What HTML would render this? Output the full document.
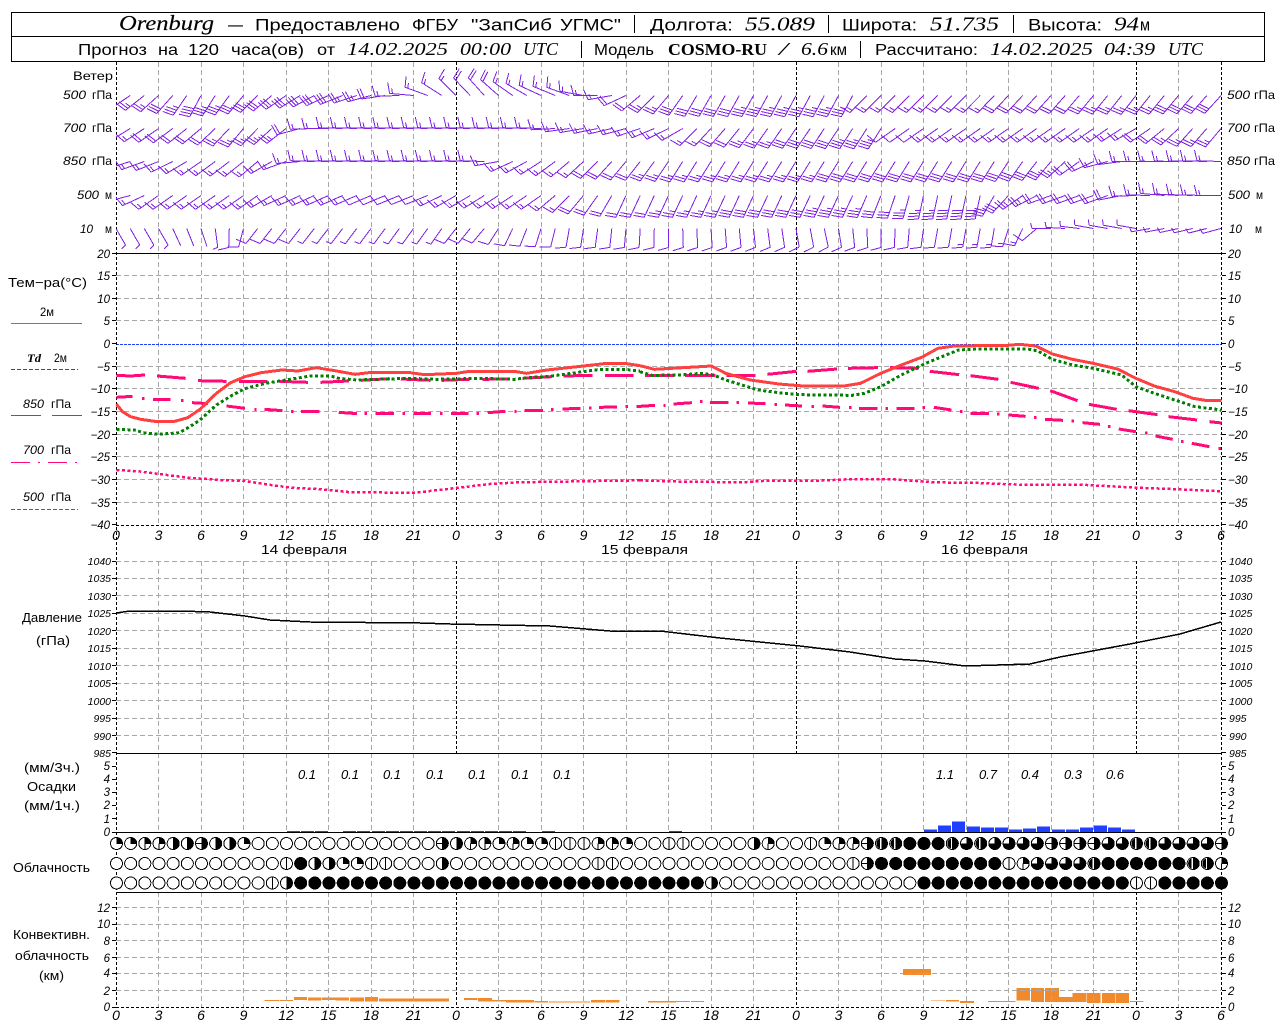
<!DOCTYPE html>
<html lang="ru"><head><meta charset="utf-8"><title>Orenburg</title>
<style>
html,body{margin:0;padding:0;background:#fff;overflow:hidden}
svg{display:block}
svg *{shape-rendering:crispEdges}
text{font-family:"Liberation Sans",sans-serif;fill:#000;shape-rendering:auto}
.h1{font-size:17px}.h2{font-size:16px}
.si{font-family:"Liberation Serif",serif;font-style:italic}
.i{font-style:italic}
.l{font-size:12px}
.ax{font-size:11.5px;font-style:italic;text-anchor:end}
.ar{font-size:11.5px;font-style:italic}
.xl{font-size:14px;font-style:italic;text-anchor:middle}
.ve{vector-effect:non-scaling-stroke;fill:none}
</style></head><body>
<svg id="s" xmlns="http://www.w3.org/2000/svg" width="1280" height="1024" viewBox="0 0 1280 1024">
<rect width="1280" height="1024" fill="#fff"/>
<!-- convective bars -->
<g id="bars">
<g transform="translate(0,750) scale(.40816,.33333)" fill="#f08a2c"><path d="M648 750H685V753H648ZM686 750H718V753H686ZM720 741H752V750H720ZM755 742H787V752H755ZM788 742H822V750H788ZM822 742H855V752H822ZM857 742H892V755H857ZM894 741H926V755H894ZM929 745H1100V755H929ZM1137 744H1170V750H1137ZM1171 744H1205V755H1171ZM1205 750H1240V755H1205ZM1240 750H1308V758H1240ZM1310 753H1342V758H1310ZM1345 754H1445V758H1345ZM1448 750H1482V758H1448ZM1484 750H1518V758H1484Z"/></g>
<g transform="translate(640,750) scale(.40816,.33333)" fill="#f08a2c"><path d="M20 753H88V758H20ZM88 753H122V756H88ZM125 753H157V756H125ZM644 657H713V675H644ZM713 750H748V752H713ZM750 750H782V755H750ZM784 753H818V759H784ZM853 753H920V756H853ZM923 714H955V752H923ZM958 714H990V756H958ZM992 714H1026V756H992ZM1026 741H1060V756H1026ZM1060 729H1094V756H1060ZM1095 729H1128V759H1095ZM1132 729H1164V759H1132ZM1165 729H1198V759H1165ZM1200 753H1234V756H1200Z"/></g>
</g>
<g id="js"></g>
<!-- header -->
<rect x="11.5" y="12.5" width="1253" height="49" fill="none" stroke="#000"/>
<path d="M11 36.5H1265M634.5 15V33M828.5 15V33M1013.5 15V33M581.5 41V58M860.5 41V58" stroke="#000" fill="none"/>
<g class="h1">
<text x="119" y="30" class="si" font-size="21" textLength="95" lengthAdjust="spacingAndGlyphs" stroke="#000" stroke-width=".15">Orenburg</text>
<text x="228" y="30" textLength="15" lengthAdjust="spacingAndGlyphs">—</text>
<text x="255" y="30.5" textLength="145" lengthAdjust="spacingAndGlyphs">Предоставлено</text>
<text x="412" y="30.5" textLength="46" lengthAdjust="spacingAndGlyphs">ФГБУ</text>
<text x="471" y="30.5" textLength="81" lengthAdjust="spacingAndGlyphs">"ЗапСиб</text>
<text x="560" y="30.5" textLength="61" lengthAdjust="spacingAndGlyphs">УГМС"</text>
<text x="650" y="30.5" textLength="83" lengthAdjust="spacingAndGlyphs">Долгота:</text>
<text x="745" y="30.5" class="si" font-size="20" textLength="70" lengthAdjust="spacingAndGlyphs">55.089</text>
<text x="842" y="30.5" textLength="75" lengthAdjust="spacingAndGlyphs">Широта:</text>
<text x="930" y="30.5" class="si" font-size="20" textLength="69" lengthAdjust="spacingAndGlyphs">51.735</text>
<text x="1028" y="30.5" textLength="74" lengthAdjust="spacingAndGlyphs">Высота:</text>
<text x="1114" y="30.5" class="si" font-size="20" textLength="25" lengthAdjust="spacingAndGlyphs">94</text>
<text x="1140" y="30.5" textLength="10" lengthAdjust="spacingAndGlyphs">м</text>
</g>
<g class="h2">
<text x="78" y="55" textLength="69" lengthAdjust="spacingAndGlyphs">Прогноз</text>
<text x="158" y="55" textLength="20" lengthAdjust="spacingAndGlyphs">на</text>
<text x="188" y="55" textLength="31" lengthAdjust="spacingAndGlyphs">120</text>
<text x="231" y="55" textLength="73" lengthAdjust="spacingAndGlyphs">часа(ов)</text>
<text x="317" y="55" textLength="18" lengthAdjust="spacingAndGlyphs">от</text>
<text x="347" y="55" class="si" font-size="18" textLength="101" lengthAdjust="spacingAndGlyphs">14.02.2025</text>
<text x="460" y="55" class="si" font-size="18" textLength="51" lengthAdjust="spacingAndGlyphs">00:00</text>
<text x="523" y="55" class="si" font-size="18" textLength="35" lengthAdjust="spacingAndGlyphs">UTC</text>
<text x="594" y="55" textLength="60" lengthAdjust="spacingAndGlyphs">Модель</text>
<text x="668" y="55" style="font-family:'Liberation Serif',serif;font-weight:bold" font-size="17" textLength="99" lengthAdjust="spacingAndGlyphs">COSMO-RU</text>
<text x="779" y="55" class="si" font-size="18" textLength="9" lengthAdjust="spacingAndGlyphs">/</text>
<text x="801" y="55" class="si" font-size="18" textLength="27" lengthAdjust="spacingAndGlyphs">6.6</text>
<text x="830" y="55" textLength="17" lengthAdjust="spacingAndGlyphs">км</text>
<text x="875" y="55" textLength="103" lengthAdjust="spacingAndGlyphs">Рассчитано:</text>
<text x="990" y="55" class="si" font-size="18" textLength="103" lengthAdjust="spacingAndGlyphs">14.02.2025</text>
<text x="1104" y="55" class="si" font-size="18" textLength="51" lengthAdjust="spacingAndGlyphs">04:39</text>
<text x="1168" y="55" class="si" font-size="18" textLength="35" lengthAdjust="spacingAndGlyphs">UTC</text>
</g>
<!-- wind labels -->
<g class="l">
<text x="73" y="80" textLength="40" lengthAdjust="spacingAndGlyphs">Ветер</text>
<text x="63" y="99" class="i" textLength="23" lengthAdjust="spacingAndGlyphs">500</text><text x="92" y="99" textLength="20" lengthAdjust="spacingAndGlyphs">гПа</text>
<text x="63" y="132" class="i" textLength="23" lengthAdjust="spacingAndGlyphs">700</text><text x="92" y="132" textLength="20" lengthAdjust="spacingAndGlyphs">гПа</text>
<text x="63" y="165" class="i" textLength="23" lengthAdjust="spacingAndGlyphs">850</text><text x="92" y="165" textLength="20" lengthAdjust="spacingAndGlyphs">гПа</text>
<text x="77" y="199" class="i" textLength="22" lengthAdjust="spacingAndGlyphs">500</text><text x="105" y="199" textLength="7" lengthAdjust="spacingAndGlyphs">м</text>
<text x="80" y="233" class="i" textLength="13" lengthAdjust="spacingAndGlyphs">10</text><text x="105" y="233" textLength="7" lengthAdjust="spacingAndGlyphs">м</text>
<text x="1227" y="99" class="i" textLength="23" lengthAdjust="spacingAndGlyphs">500</text><text x="1254" y="99" textLength="21" lengthAdjust="spacingAndGlyphs">гПа</text>
<text x="1227" y="132" class="i" textLength="23" lengthAdjust="spacingAndGlyphs">700</text><text x="1254" y="132" textLength="21" lengthAdjust="spacingAndGlyphs">гПа</text>
<text x="1227" y="165" class="i" textLength="23" lengthAdjust="spacingAndGlyphs">850</text><text x="1254" y="165" textLength="21" lengthAdjust="spacingAndGlyphs">гПа</text>
<text x="1228" y="199" class="i" textLength="22" lengthAdjust="spacingAndGlyphs">500</text><text x="1256" y="199" textLength="7" lengthAdjust="spacingAndGlyphs">м</text>
<text x="1229" y="233" class="i" textLength="13" lengthAdjust="spacingAndGlyphs">10</text><text x="1255" y="233" textLength="7" lengthAdjust="spacingAndGlyphs">м</text>
<!-- temp legend -->
<text x="8" y="287" font-size="13" textLength="79" lengthAdjust="spacingAndGlyphs">Тем−ра(°С)</text>
<text x="40" y="316" textLength="14" lengthAdjust="spacingAndGlyphs">2м</text>
<text x="27" y="362" class="si" style="font-weight:bold" textLength="14" lengthAdjust="spacingAndGlyphs">Td</text><text x="54" y="362" textLength="13" lengthAdjust="spacingAndGlyphs">2м</text>
<text x="23" y="408" class="i" textLength="21" lengthAdjust="spacingAndGlyphs">850</text><text x="51" y="408" textLength="20" lengthAdjust="spacingAndGlyphs">гПа</text>
<text x="23" y="454" class="i" textLength="21" lengthAdjust="spacingAndGlyphs">700</text><text x="51" y="454" textLength="20" lengthAdjust="spacingAndGlyphs">гПа</text>
<text x="23" y="501" class="i" textLength="21" lengthAdjust="spacingAndGlyphs">500</text><text x="51" y="501" textLength="20" lengthAdjust="spacingAndGlyphs">гПа</text>
<text x="261" y="554" font-size="13" textLength="86" lengthAdjust="spacingAndGlyphs">14 февраля</text>
<text x="601" y="554" font-size="13" textLength="87" lengthAdjust="spacingAndGlyphs">15 февраля</text>
<text x="941" y="554" font-size="13" textLength="87" lengthAdjust="spacingAndGlyphs">16 февраля</text>
<text x="22" y="622" font-size="13" textLength="60" lengthAdjust="spacingAndGlyphs">Давление</text>
<text x="36" y="645" font-size="13" textLength="34" lengthAdjust="spacingAndGlyphs">(гПа)</text>
<text x="24" y="772" font-size="13" textLength="56" lengthAdjust="spacingAndGlyphs">(мм/3ч.)</text>
<text x="27" y="791" font-size="13" textLength="49" lengthAdjust="spacingAndGlyphs">Осадки</text>
<text x="24" y="810" font-size="13" textLength="56" lengthAdjust="spacingAndGlyphs">(мм/1ч.)</text>
<text x="13" y="872" font-size="13" textLength="77" lengthAdjust="spacingAndGlyphs">Облачность</text>
<text x="13" y="939" font-size="13" textLength="77" lengthAdjust="spacingAndGlyphs">Конвективн.</text>
<text x="15" y="960" font-size="13" textLength="74" lengthAdjust="spacingAndGlyphs">облачность</text>
<text x="39" y="980" font-size="13" textLength="25" lengthAdjust="spacingAndGlyphs">(км)</text>
</g>
<!-- legend lines -->
<path d="M11 323.5H82" stroke="#ff4040" fill="none"/>
<path d="M11 369.5H78" stroke="#008000" stroke-dasharray="4 2" fill="none"/>
<path d="M11 415.5H41M52 415.5H82" stroke="#ff0a78" fill="none"/>
<path d="M11 462.5H30M38 462.5H40M48 462.5H67M75 462.5H77" stroke="#ff0a78" fill="none"/>
<path d="M11 509.5H78" stroke="#ff0a78" stroke-dasharray="4 2" fill="none"/>
<!-- left axis numbers -->
<g class="ax">
<text x="110" y="258">20</text><text x="110" y="280">15</text><text x="110" y="303">10</text><text x="110" y="325">5</text><text x="110" y="348">0</text><text x="110" y="371">−5</text><text x="110" y="393">−10</text><text x="110" y="416">−15</text><text x="110" y="439">−20</text><text x="110" y="461">−25</text><text x="110" y="484">−30</text><text x="110" y="507">−35</text><text x="110" y="529">−40</text>
<g style="font-size:10.5px"><text x="111" y="565">1040</text><text x="111" y="582">1035</text><text x="111" y="600">1030</text><text x="111" y="617">1025</text><text x="111" y="635">1020</text><text x="111" y="652">1015</text><text x="111" y="670">1010</text><text x="111" y="687">1005</text><text x="111" y="705">1000</text><text x="111" y="722">995</text><text x="111" y="740">990</text><text x="111" y="757">985</text></g>
<text x="110" y="770">5</text><text x="110" y="783">4</text><text x="110" y="796">3</text><text x="110" y="809">2</text><text x="110" y="823">1</text><text x="110" y="836">0</text>
<text x="110" y="912">12</text><text x="110" y="928">10</text><text x="110" y="945">8</text><text x="110" y="962">6</text><text x="110" y="977">4</text><text x="110" y="995">2</text><text x="110" y="1011">0</text>
</g>
<!-- right axis numbers -->
<g class="ar">
<text x="1228" y="258">20</text><text x="1228" y="280">15</text><text x="1228" y="303">10</text><text x="1228" y="325">5</text><text x="1228" y="348">0</text><text x="1228" y="371">−5</text><text x="1228" y="393">−10</text><text x="1228" y="416">−15</text><text x="1228" y="439">−20</text><text x="1228" y="461">−25</text><text x="1228" y="484">−30</text><text x="1228" y="507">−35</text><text x="1228" y="529">−40</text>
<g style="font-size:10.5px"><text x="1229" y="565">1040</text><text x="1229" y="582">1035</text><text x="1229" y="600">1030</text><text x="1229" y="617">1025</text><text x="1229" y="635">1020</text><text x="1229" y="652">1015</text><text x="1229" y="670">1010</text><text x="1229" y="687">1005</text><text x="1229" y="705">1000</text><text x="1229" y="722">995</text><text x="1229" y="740">990</text><text x="1229" y="757">985</text></g>
<text x="1228" y="770">5</text><text x="1228" y="783">4</text><text x="1228" y="796">3</text><text x="1228" y="809">2</text><text x="1228" y="823">1</text><text x="1228" y="836">0</text>
<text x="1228" y="912">12</text><text x="1228" y="928">10</text><text x="1228" y="945">8</text><text x="1228" y="962">6</text><text x="1228" y="977">4</text><text x="1228" y="995">2</text><text x="1228" y="1011">0</text>
</g>
<!-- x labels -->
<g class="xl">
<text x="116" y="540">0</text><text x="158.5" y="540">3</text><text x="201" y="540">6</text><text x="243.5" y="540">9</text><text x="286" y="540">12</text><text x="328.5" y="540">15</text><text x="371" y="540">18</text><text x="413.5" y="540">21</text><text x="456" y="540">0</text><text x="498.5" y="540">3</text><text x="541" y="540">6</text><text x="583.5" y="540">9</text><text x="626" y="540">12</text><text x="668.5" y="540">15</text><text x="711" y="540">18</text><text x="753.5" y="540">21</text><text x="796" y="540">0</text><text x="838.5" y="540">3</text><text x="881" y="540">6</text><text x="923.5" y="540">9</text><text x="966" y="540">12</text><text x="1008.5" y="540">15</text><text x="1051" y="540">18</text><text x="1093.5" y="540">21</text><text x="1136" y="540">0</text><text x="1178.5" y="540">3</text><text x="1221" y="540">6</text>
<text x="116" y="1020">0</text><text x="158.5" y="1020">3</text><text x="201" y="1020">6</text><text x="243.5" y="1020">9</text><text x="286" y="1020">12</text><text x="328.5" y="1020">15</text><text x="371" y="1020">18</text><text x="413.5" y="1020">21</text><text x="456" y="1020">0</text><text x="498.5" y="1020">3</text><text x="541" y="1020">6</text><text x="583.5" y="1020">9</text><text x="626" y="1020">12</text><text x="668.5" y="1020">15</text><text x="711" y="1020">18</text><text x="753.5" y="1020">21</text><text x="796" y="1020">0</text><text x="838.5" y="1020">3</text><text x="881" y="1020">6</text><text x="923.5" y="1020">9</text><text x="966" y="1020">12</text><text x="1008.5" y="1020">15</text><text x="1051" y="1020">18</text><text x="1093.5" y="1020">21</text><text x="1136" y="1020">0</text><text x="1178.5" y="1020">3</text><text x="1221" y="1020">6</text>
<!-- precip totals -->
<g style="font-size:13px"><text x="307" y="779">0.1</text><text x="350" y="779">0.1</text><text x="392" y="779">0.1</text><text x="435" y="779">0.1</text><text x="477" y="779">0.1</text><text x="520" y="779">0.1</text><text x="562" y="779">0.1</text><text x="945" y="779">1.1</text><text x="988" y="779">0.7</text><text x="1030" y="779">0.4</text><text x="1073" y="779">0.3</text><text x="1115" y="779">0.6</text></g>
</g>
<!-- temperature curves: zoom coords -->
<g transform="translate(0,250) scale(.40816,.33333)">
<polyline class="ve" stroke="#ff0a78" stroke-width="2.5" stroke-dasharray="3 2.5" points="285,660 340,664 390,672 460,683 540,690 600,693 680,708 730,715 770,716 860,727 1020,728 1060,722 1118,714 1200,702 1270,697 1568,691"/>
<path class="ve" stroke="#ff0a78" stroke-width="3" d="M285 442L325 439M348 445L354 446M375 448L418 448M443 451L449 451M470 458L510 461M555 468L600 475M623 478L629 478M648 478L692 482M713 484L719 484M738 484L783 484M830 487L875 491M893 491L899 491M920 491L965 491M986 491L992 491M1013 491L1056 491M1078 491L1084 491M1105 491L1148 491M1168 490L1174 490M1195 488L1238 484M1260 484L1266 484M1285 482L1330 481M1350 478L1356 478M1378 477L1422 475M1443 474L1449 474M1468 472L1512 471M1533 470L1539 470M1560 469L1568 469"/>
<path class="ve" stroke="#ff0a78" stroke-width="3" d="M285 376L320 378L355 375M385 378L455 385M485 392L555 394M585 394L655 394M685 394L755 397M785 397L855 393M885 391L955 386M982 387L1055 391M1082 391L1150 388M1182 388L1250 387M1280 385L1352 380M1380 378L1452 376M1482 376L1552 376"/>
<polyline class="ve" stroke="#008000" stroke-width="3" stroke-dasharray="3 2.5" points="285,538 330,540 350,548 390,553 440,548 465,530 490,510 530,465 570,435 600,416 650,400 700,390 760,378 810,378 830,385 875,390 1000,385 1070,388 1118,387 1170,385 1260,388 1300,382 1340,380 1400,370 1470,358 1530,358 1568,363"/>
<polyline class="ve" stroke="#ff4040" stroke-width="3" points="285,462 300,485 320,500 345,508 385,515 425,515 460,503 490,478 530,430 565,398 600,380 640,368 690,360 730,363 775,353 820,362 870,373 910,367 1000,367 1040,374 1118,370 1150,364 1260,364 1290,370 1340,360 1430,348 1480,341 1530,340 1568,347"/>
</g>
<g transform="translate(640,250) scale(.40816,.33333)">
<polyline class="ve" stroke="#ff0a78" stroke-width="2.5" stroke-dasharray="3 2.5" points="0,691 130,696 180,696 250,697 300,693 420,693 510,688 620,688 720,697 830,699 930,704 1080,704 1170,710 1215,713 1300,717 1425,724"/>
<path class="ve" stroke="#ff0a78" stroke-width="3" d="M0 469L37 466M57 466L63 466M82 462L127 458M147 455L153 455M172 458L217 458M237 457L243 457M265 459L307 461M330 463L336 463M355 465L397 468M420 469L426 469M447 468L490 472M512 472L518 472M537 476L582 476M602 475L608 475M628 475L673 475M692 473L698 473M720 472L763 480M784 484L790 484M810 491L855 491M875 492L881 492M903 495L945 499M965 502L971 502M992 508L1036 511M1057 513L1063 513M1084 518L1127 523M1147 530L1153 530M1173 537L1215 545M1237 549L1243 549M1263 558L1305 568M1325 575L1331 575M1352 580L1395 590M1417 596L1423 596"/>
<path class="ve" stroke="#ff0a78" stroke-width="3" d="M12 376L85 376M110 376L185 376M212 377L283 377M312 373L383 364M410 364L483 357M510 355L583 353M612 353L683 355M710 364L782 374M810 377L878 388M908 397L977 415M1005 422L1072 452M1100 463L1168 478M1197 482L1268 494M1295 500L1365 510M1395 515L1425 519"/>
<polyline class="ve" stroke="#008000" stroke-width="3" stroke-dasharray="3 2.5" points="0,365 30,376 100,375 150,370 180,375 210,390 250,405 290,420 340,428 390,434 520,436 550,430 590,410 640,375 700,340 750,315 780,300 830,297 950,297 975,303 1010,328 1060,345 1110,355 1180,375 1215,410 1260,430 1310,450 1360,470 1425,480"/>
<polyline class="ve" stroke="#ff4040" stroke-width="3" points="0,347 35,358 120,352 175,348 210,370 270,390 340,402 400,408 500,408 540,400 590,370 640,345 690,322 730,295 770,288 900,286 930,283 970,288 1010,312 1060,328 1110,340 1170,357 1215,385 1260,408 1310,425 1355,445 1390,452 1425,452"/>
</g>
<!-- pressure -->
<polyline fill="none" stroke="#000" stroke-width="1.5" points="116,613 130,611 180,611 210,612 245,616 270,620 310,622 420,623 450,624 550,626 610,631 660,631 720,638 800,646 850,652 895,659 925,661 965,666 1030,664 1060,657 1130,644 1180,634 1221,622"/>
</svg>
<script>
(function(){
var NS='http://www.w3.org/2000/svg',root=document.getElementById('js'),bars=document.getElementById('bars');
function add(p,t,a){var e=document.createElementNS(NS,t);for(var k in a)e.setAttribute(k,a[k]);p.appendChild(e);return e}
var W=14.1667,X0=116;
function px(h){return Math.floor(X0+h*W)+.5}
var small=[12,13,14,16,17,18,19,20,21,22,23,24,25,26,27,28,30,39];
small.forEach(function(h){add(bars,'rect',{x:Math.floor(X0+h*W)+1,y:831,width:13,height:1.5,fill:'#2040ff'})});
var big=[2.3,6.3,10.3,5.3,4.3,4.3,2.3,3.3,5.3,2.3,2.3,4.3,6.3,4.3,2.3];
big.forEach(function(v,i){add(bars,'rect',{x:Math.floor(X0+(57+i)*W)+1,y:832-v,width:13,height:v,fill:'#2040ff'})});
var g='',day='';
var R=[[62,525],[561,753],[753,832],[892,1007]];
for(var k=1;k<26;k++){var x=px(k*3);
  var isDay=k%8===0;
  R.forEach(function(r,j){
    if(isDay){if(j!==2)day+='M'+x+' '+r[0]+'V'+r[1]}
    else g+='M'+x+' '+r[0]+'V'+r[1];
  });
}
function hl(y){g+='M116 '+(Math.floor(y)+.5)+'H1221'}
for(var v=15;v>=-35;v-=5){if(v!==0)hl(253+(20-v)*4.5333)}
for(var i=0;i<11;i++)hl(561+i*17.4545);
for(var c=2;c<=12;c+=2)hl(1007-c*8.27);
add(root,'path',{d:g,stroke:'#a8a8a8','stroke-dasharray':'5 3',fill:'none'});
add(root,'path',{d:'M116 344.5H1221',stroke:'#2040ff','stroke-dasharray':'3 1',fill:'none'});
add(root,'path',{d:day+'M116.5 62V1007M1221.5 62V1007',stroke:'#000','stroke-dasharray':'3 2',fill:'none'});
add(root,'path',{d:'M116 253.5H1222M116 753.5H1222M116 832.5H1222M116 892.5H1222',stroke:'#000',fill:'none'});
add(root,'path',{d:'M116 525.5H1222M116 1007.5H1222',stroke:'#000','stroke-dasharray':'3 2',fill:'none'});
var t='';
function tick(y){var yy=Math.floor(y)+.5;t+='M112 '+yy+'H116M1222 '+yy+'H1226'}
for(v=20;v>=-40;v-=5)tick(253+(20-v)*4.5333);
for(i=0;i<12;i++)tick(561+i*17.4545);
for(i=0;i<6;i++)tick(766+i*13.2);
for(c=0;c<=12;c+=2)tick(1007-c*8.27);
add(root,'path',{d:t,stroke:'#000',fill:'none'});
var clip=add(add(root,'defs',{}),'clipPath',{id:'cw'});add(clip,'rect',{x:116,y:62,width:1106,height:191});
var L=[
[95.5,24,[0,150,4,3,138,5,6,118,8,9,130,6,12,145,6,15,155,6,18,165,5,20,178,3,21,185,3,22,200,3,24,225,3,26,228,4,28,215,3,30,205,3,32,200,3,34,180,3,35,170,3,37,140,4,39,130,5,41,120,6,48,118,7,52,118,7,53,135,3,60,135,3,66,132,4,72,128,5,78,132,6]],
[128.5,24,[0,150,3,6,140,4,9,130,5,12,142,5,13,165,4,14,178,3,16,182,3,30,182,3,32,172,3,36,165,3,40,150,3,41,135,3,46,125,5,54,122,7,55,145,2,60,145,3,70,145,3,72,150,3,76,132,5,78,130,5]],
[161.5,24,[0,165,3,3,158,3,6,145,3,10,140,3,12,160,3,13,175,3,14,182,3,26,182,3,27,170,3,28,155,3,32,140,3,36,130,4,40,122,5,62,122,6,64,125,6,66,130,6,68,145,4,70,165,3,72,180,3,78,182,3]],
[195.5,24,[0,175,3,3,145,3,10,145,3,12,155,3,22,158,2,24,150,3,30,145,3,36,115,4,52,115,7,54,112,6,57,102,7,61,102,8,62,120,6,64,145,5,66,160,4,70,160,4,72,178,3,74,185,3,78,180,3]],
[228.5,19,[0,60,1,3,60,1,4,65,0,6,72,0,7,82,1,8,92,2,9,105,2,10,128,2,12,128,2,14,128,1,23,125,1,24,128,2,26,130,2,28,115,2,32,100,2,36,95,2,40,88,2,44,85,2,50,78,2,54,90,2,58,100,2,62,100,3,64,115,3,65,140,2,66,180,1,69,190,1,72,190,1,73,170,1,78,165,1]]
];
function itp(k,h){for(var i=0;i<k.length-3;i+=3){if(h>=k[i]&&h<=k[i+3]){var f=(h-k[i])/(k[i+3]-k[i]);return [k[i+1]+f*(k[i+4]-k[i+1]),k[i+2]+f*(k[i+5]-k[i+2])]}}return [k[k.length-2],k[k.length-1]]}
var d='',D=Math.PI/180,TH=75;
L.forEach(function(l){
  var LEN=l[1];
  for(var h=0;h<=78;h++){
    var a=itp(l[2],h),ph=a[0]*D,n=Math.round(a[1]),tx=X0+h*W,ty=l[0];
    var ux=Math.cos(ph),uy=Math.sin(ph),ex=tx+LEN*ux,ey=ty+LEN*uy;
    d+='M'+tx.toFixed(1)+' '+ty+'L'+ex.toFixed(1)+' '+ey.toFixed(1);
    var fx=Math.cos(ph+TH*D),fy=Math.sin(ph+TH*D),s=0;
    for(var q=0;q<Math.floor(n/2);q++){var bx=ex-ux*s,by=ey-uy*s;d+='M'+bx.toFixed(1)+' '+by.toFixed(1)+'l'+(fx*11).toFixed(1)+' '+(fy*11).toFixed(1);s+=3}
    if(n%2){var b2x=ex-ux*s,b2y=ey-uy*s;d+='M'+b2x.toFixed(1)+' '+b2y.toFixed(1)+'l'+(fx*5.5).toFixed(1)+' '+(fy*5.5).toFixed(1)}
  }
});
add(root,'path',{d:d,stroke:'#8020e0',fill:'none','clip-path':'url(#cw)'});
function rep(c,n){return new Array(n+1).join(c)}
var rows=[
[843.5,'2233445442'+rep('0',13)+'54332322111332'+'00110000430012335'+'7788876766665555667766665'],
[863.5,rep('0',12)+'18442211'+'000'+'4'+rep('0',10)+'11'+rep('0',16)+'15'+rep('8',9)+'13'+'6666'+'7'+rep('8',6)+'77'+'3'],
[883,rep('0',11)+'14'+rep('8',29)+'4'+rep('0',14)+rep('8',15)+'11'+'88888']
];
var r=6;
rows.forEach(function(row){
  var cy=row[0],s=row[1];
  for(var i=0;i<s.length;i++){
    var c=+s[i],cx=116.5+i*W,T=cy-r,B=cy+r,Lx=cx-r,Rx=cx+r,p='';
    add(root,'circle',{cx:cx,cy:cy,r:r,fill:c===8?'#000':'#fff',stroke:'#000'});
    var arc='A'+r+' '+r+' 0 ';
    if(c===2||c===3)p='M'+cx+' '+cy+'V'+T+arc+'0 1 '+Rx+' '+cy+'Z';
    if(c===4||c===5||c===7)p='M'+cx+' '+T+arc+'0 1 '+cx+' '+B+'Z';
    if(c===6)p='M'+cx+' '+cy+'V'+T+arc+'1 1 '+Lx+' '+cy+'Z';
    if(p)add(root,'path',{d:p,fill:'#000',stroke:'#000','stroke-width':.5});
    if(c===1)add(root,'path',{d:'M'+cx+' '+T+'V'+B,stroke:'#000'});
    if(c===3)add(root,'path',{d:'M'+cx+' '+cy+'V'+B,stroke:'#000'});
    if(c===5)add(root,'path',{d:'M'+Lx+' '+cy+'H'+cx,stroke:'#000'});
    if(c===7)add(root,'path',{d:'M'+(Lx+1)+' '+cy+'A'+(r-1)+' '+(r-1)+' 0 0 1 '+(cx-1.5)+' '+(T+1)+'V'+(B-1)+'A'+(r-1)+' '+(r-1)+' 0 0 1 '+(Lx+1)+' '+cy+'Z',fill:'#000'});
  }
});
})();
</script>
</body></html>
